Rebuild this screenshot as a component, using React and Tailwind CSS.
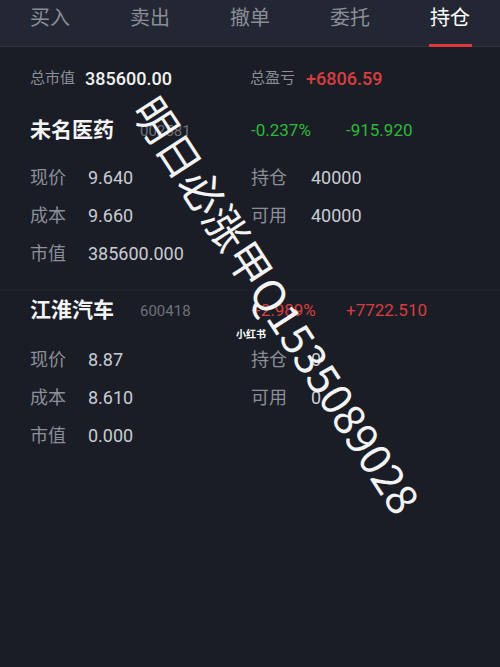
import React from 'react'

const tabs = ['买入', '卖出', '撤单', '委托', '持仓']

const stocks = [
  {
    name: '未名医药',
    code: '002581',
    pct: '-0.237%',
    amount: '-915.920',
    up: false,
    price: '9.640',
    cost: '9.660',
    value: '385600.000',
    hold: '40000',
    avail: '40000',
  },
  {
    name: '江淮汽车',
    code: '600418',
    pct: '+2.989%',
    amount: '+7722.510',
    up: true,
    price: '8.87',
    cost: '8.610',
    value: '0.000',
    hold: '0',
    avail: '0',
  },
]

const font = { fontFamily: 'Roboto, "Noto Sans CJK SC", sans-serif' }

function Row({ label, value, rLabel, rValue }) {
  return (
    <div className="flex h-[38px] items-center text-[18px]">
      <div className="flex w-[221px] items-center">
        <span className="w-[58px] text-[#8b8f99]">{label}</span>
        <span className="text-[#c9ccd3]">{value}</span>
      </div>
      {rLabel && (
        <div className="flex items-center">
          <span className="w-[60px] text-[#8b8f99]">{rLabel}</span>
          <span className="text-[#c9ccd3]">{rValue}</span>
        </div>
      )}
    </div>
  )
}

function StockBlock({ s, first }) {
  const color = s.up ? 'text-[#d83d3f]' : 'text-[#2cbb36]'
  return (
    <div className={first ? 'pl-[30px] pt-[14px] pb-[18px] border-b border-[#1f222b]' : 'pl-[30px] pt-[2px]'}>
      <div className="flex h-[36px] items-center">
        <div className="flex w-[221px] items-center">
          <span className="w-[110px] text-[21px] font-bold text-[#f4f4f4]">{s.name}</span>
          <span className="text-[15px] text-[#6c717b]">{s.code}</span>
        </div>
        <span className={'w-[95px] text-[17px] ' + color}>{s.pct}</span>
        <span className={'text-[17px] ' + color}>{s.amount}</span>
      </div>
      <div className={first ? 'mt-[9px]' : 'mt-[11px]'}>
        <Row label="现价" value={s.price} rLabel="持仓" rValue={s.hold} />
        <Row label="成本" value={s.cost} rLabel="可用" rValue={s.avail} />
        <Row label="市值" value={s.value} />
      </div>
    </div>
  )
}

export default function App() {
  return (
    <div className="relative min-h-[667px] overflow-hidden bg-[#1b1d26]" style={font}>
      {/* 顶部标签 */}
      <div className="grid h-[47px] grid-cols-5 border-b border-[#2e323d] bg-[#232733]">
        {tabs.map((t, i) => (
          <div key={t} className="relative flex justify-center pt-[5px]">
            <span className={'text-[20px] leading-[26px] ' + (i === 4 ? 'text-white' : 'text-[#8a8e98]')}>{t}</span>
            {i === 4 && <div className="absolute bottom-[-1px] h-[3px] w-[43px] bg-[#dc3a40]" />}
          </div>
        ))}
      </div>

      {/* 汇总 */}
      <div className="flex pl-[30px] pt-[18px] pb-[8px]">
        <div className="flex w-[220px] items-center h-[26px]">
          <span className="mr-[10px] text-[15px] text-[#8b8f99]">总市值</span>
          <span className="text-[18px] font-medium text-[#f2f2f2]">385600.00</span>
        </div>
        <div className="flex items-center h-[26px]">
          <span className="mr-[11px] text-[15px] text-[#8b8f99]">总盈亏</span>
          <span className="text-[18px] font-medium text-[#d83d3f]">+6806.59</span>
        </div>
      </div>

      {stocks.map((s, i) => (
        <StockBlock key={s.code} s={s} first={i === 0} />
      ))}

      {/* 水印 */}
      <div
        className="absolute left-[146px] top-[79px] origin-left rotate-[57deg] whitespace-nowrap text-[43px] leading-[43px] text-[#f4f4f4]"
        style={{ fontFamily: '"Noto Sans CJK SC", sans-serif' }}
      >
        明日必涨甲Q1535089028
      </div>
      <div
        className="absolute left-[236px] top-[326px] text-[10px] font-bold text-white"
        style={{ fontFamily: '"Noto Sans CJK SC", sans-serif' }}
      >
        小红书
      </div>
    </div>
  )
}
